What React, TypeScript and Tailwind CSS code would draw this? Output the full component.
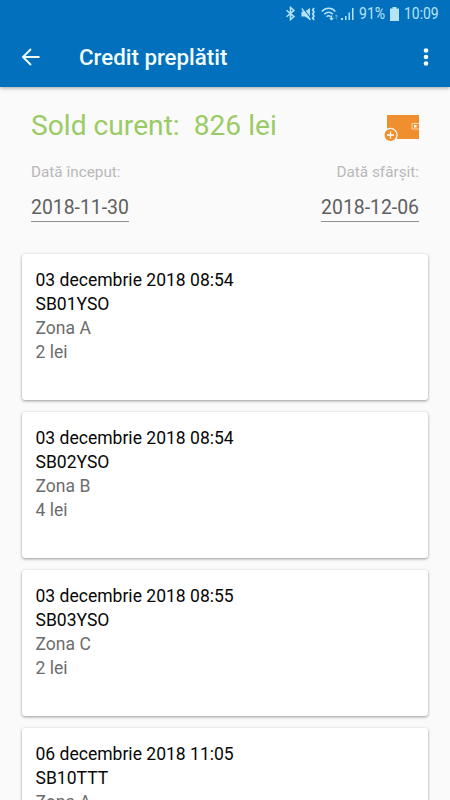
const transactions = [
  { date: '03 decembrie 2018 08:54', plate: 'SB01YSO', zone: 'Zona A', price: '2 lei' },
  { date: '03 decembrie 2018 08:54', plate: 'SB02YSO', zone: 'Zona B', price: '4 lei' },
  { date: '03 decembrie 2018 08:55', plate: 'SB03YSO', zone: 'Zona C', price: '2 lei' },
  { date: '06 decembrie 2018 11:05', plate: 'SB10TTT', zone: 'Zona A' },
];

function StatusBar() {
  return (
    <div className="flex h-[27px] items-center pl-[285px] text-[16px] leading-none text-[#b5e4f7]">
      <svg width="11" height="15" viewBox="0 0 11 15" fill="none" stroke="currentColor" strokeWidth="1.5">
        <path d="M1.5 4.2 9 10.6 5.5 13.6V1.4L9 4.4 1.5 10.8" />
      </svg>
      <svg className="ml-[5px]" width="15" height="14" viewBox="0 0 15 14">
        <path d="M.5 4.5h3.5L9 1v12L4 9.5H.5z" fill="currentColor" />
        <path d="M1.8 .8 10 11.5" stroke="#0370bd" strokeWidth="1.2" />
        <path d="M.8 1.5 9.5 12.8" stroke="currentColor" strokeWidth="1.3" />
        <path d="m13 1-1.3 2L13 5l-1.3 2L13 9l-1.3 2 1.3 2" fill="none" stroke="currentColor" strokeWidth="1.7" />
      </svg>
      <svg className="ml-[5px]" width="18" height="14" viewBox="0 0 18 14" fill="none" stroke="currentColor">
        <path d="M.8 4.5c4-4.2 10-4.2 13.5 0M3.2 7.3c2.8-2.9 6.2-2.9 8.8 0M5.6 9.800c1.3-1.3 2.7-1.3 4 0" strokeWidth="1.5" />
        <path d="M10.5 8.5v4M8.8 11l1.7 1.7 1.7-1.7" strokeWidth="1.2" />
        <path d="M15.3 12V8M13.8 9.5 15.3 8l1.5 1.5" strokeWidth="1" opacity=".5" />
      </svg>
      <svg className="ml-[2px]" width="14" height="14" viewBox="0 0 14 14" fill="currentColor">
        <path d="M0 11h2v2H0zM4 9h1.500v4H4zM7.500 5.500H9V13H7.500zM11 1h1.500v12H11z" />
      </svg>
      <span className="ml-[4px] w-[31px] origin-left scale-x-[.88] whitespace-nowrap">91%</span>
      <svg width="9" height="14" viewBox="0 0 9 14" fill="currentColor">
        <path d="M2.5 0h4v1.5H9V14H0V1.5h2.5z" />
      </svg>
      <span className="ml-[5px] origin-left scale-x-[.87] whitespace-nowrap">10:09</span>
    </div>
  );
}

function WalletIcon() {
  return (
    <svg width="36" height="28" viewBox="0 0 36 28">
      <path d="M3 1h32v24H3z" fill="#f08f2e" />
      <path d="M35 9.5h-7V15h7" fill="#f08f2e" stroke="#fbd5ae" strokeWidth="1" />
      <rect x="30" y="11" width="2.5" height="2.5" fill="#fff" />
      <circle cx="6.5" cy="21" r="7.2" fill="#fafafa" />
      <circle cx="6.5" cy="21" r="6" fill="#f08f2e" />
      <path d="M3 21h7M6.5 17.5v7" stroke="#fff" strokeWidth="1.3" />
    </svg>
  );
}

export default function App() {
  return (
    <div className="flex h-[800px] w-[450px] flex-col overflow-hidden bg-[#fafafa] font-[Roboto,sans-serif]">
      <header className="h-[87px] shrink-0 bg-[#0370bd] shadow-[0_1px_4px_rgba(0,0,0,0.35)]">
        <StatusBar />
        <div className="flex h-[60px] items-center pl-[21px] pr-[20px] text-[#f2fcff]">
          <svg width="20" height="20" viewBox="0 0 20 20" fill="none" stroke="currentColor" strokeWidth="1.9">
            <path d="M18.5 10h-16M10 2l-8 8 8 8" />
          </svg>
          <h1 className="ml-[38px] flex-1 pt-[2px] text-[22.3px] font-medium">Credit preplătit</h1>
          <svg width="8" height="20" viewBox="0 0 8 20" fill="currentColor">
            <circle cx="4" cy="3.5" r="2.3" />
            <circle cx="4" cy="10" r="2.3" />
            <circle cx="4" cy="16.5" r="2.3" />
          </svg>
        </div>
      </header>

      <section className="h-[167px] shrink-0 px-[31px] pt-[20px]">
        <div className="flex h-[36px] items-center justify-between">
          <p className="whitespace-pre pt-[2px] text-[28.2px] text-[#9bcb65]">Sold curent:  826 lei</p>
          <div className="-mr-[1px] pt-[6px]">
            <WalletIcon />
          </div>
        </div>
        <div className="mt-[19px] flex justify-between">
          <div className="flex flex-col items-start">
            <span className="text-[15.3px] leading-[20px] text-[#b8b8b8]">Dată început:</span>
            <span className="mt-[12px] h-[28px] border-b border-[#929292] text-[19.4px] leading-[28px] text-[#606060]">2018-11-30</span>
          </div>
          <div className="flex flex-col items-end">
            <span className="text-[15.3px] leading-[20px] text-[#b8b8b8]">Dată sfârșit:</span>
            <span className="mt-[12px] h-[28px] border-b border-[#929292] text-[19.4px] leading-[28px] text-[#606060]">2018-12-06</span>
          </div>
        </div>
      </section>

      <main className="flex flex-col gap-3 px-[22px]">
        {transactions.map((item) => (
          <div
            key={item.plate}
            className="h-[146px] shrink-0 rounded-[3px] bg-white px-[13.5px] pt-[15.3px] text-[17.55px] leading-[23.8px] shadow-[0_1px_3px_rgba(0,0,0,0.4)]"
          >
            <p className="text-[#080808]">{item.date}</p>
            <p className="text-[#080808]">{item.plate}</p>
            <p className="text-[#6c6c6c]">{item.zone}</p>
            {item.price && <p className="text-[#6c6c6c]">{item.price}</p>}
          </div>
        ))}
      </main>
    </div>
  );
}
